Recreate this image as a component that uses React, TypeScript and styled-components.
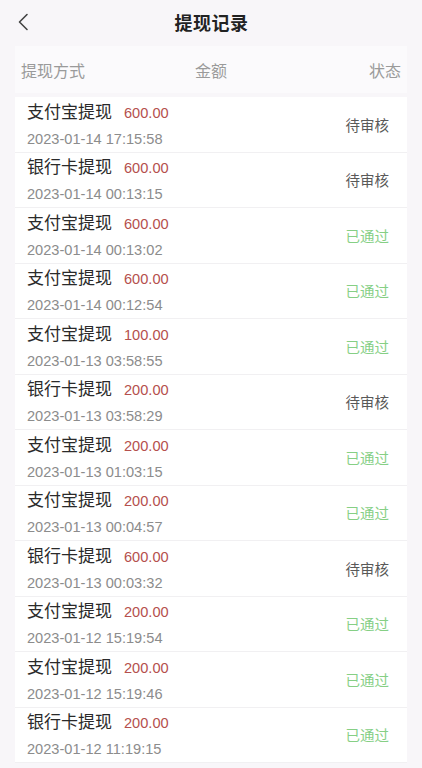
import React from 'react'
import styled, { createGlobalStyle } from 'styled-components'

const GlobalStyle = createGlobalStyle`
  html, body {
    margin: 0;
    padding: 0;
    background: #f8f6f9;
  }
  body {
    font-family: "Liberation Sans", "Noto Sans CJK SC", sans-serif;
  }
`

const Page = styled.div`
  width: 422px;
  min-height: 768px;
  background: #f8f6f9;
  overflow: hidden;
`

const NavBar = styled.div`
  height: 44px;
  display: flex;
  align-items: center;
  justify-content: center;
  position: relative;
`

const BackButton = styled.button`
  position: absolute;
  left: 12px;
  top: 10px;
  width: 22px;
  height: 24px;
  padding: 0;
  border: 0;
  background: none;
  display: flex;
  align-items: center;
  justify-content: center;
`

const Title = styled.h1`
  margin: 0;
  font-size: 18px;
  font-weight: 700;
  color: #222;
  letter-spacing: 0.5px;
  padding-left: 1px;
`

const Panel = styled.div`
  margin: 2px 15px 0;
`

const HeaderRow = styled.div`
  height: 47px;
  display: grid;
  grid-template-columns: 1fr 1fr 1fr;
  align-items: center;
  background: #fbfafc;
  font-size: 16px;
  color: #9a9a9a;
  margin-bottom: 4px;
`

const HeaderCell = styled.div<{ $align: 'left' | 'center' | 'right' }>`
  text-align: ${p => p.$align};
  padding: ${p => (p.$align === 'left' ? '0 0 0 6px' : p.$align === 'right' ? '0 6px 0 0' : '0')};
`

const List = styled.div`
  background: #fff;
`

const Row = styled.div`
  height: 55.5px;
  box-sizing: border-box;
  border-bottom: 1px solid #f1f0f2;
  display: flex;
  align-items: center;
  justify-content: space-between;
  padding: 0 18px 0 12px;
`

const Info = styled.div`
  display: flex;
  flex-direction: column;
  gap: 8px;
  margin-top: 2px;
`

const TopLine = styled.div`
  display: flex;
  align-items: baseline;
  gap: 12px;
`

const Method = styled.span`
  font-size: 17px;
  color: #2a2a2a;
  line-height: 20px;
`

const Amount = styled.span`
  font-size: 14.6px;
  color: #b5504d;
`

const Time = styled.span`
  font-size: 14.6px;
  color: #8c8c8c;
  line-height: 17px;
`

const Status = styled.span<{ $done: boolean }>`
  font-size: 14.5px;
  color: ${p => (p.$done ? '#86cf85' : '#595959')};
`

type Record = {
  method: string
  amount: string
  time: string
  done: boolean
}

const records: Record[] = [
  { method: '支付宝提现', amount: '600.00', time: '2023-01-14 17:15:58', done: false },
  { method: '银行卡提现', amount: '600.00', time: '2023-01-14 00:13:15', done: false },
  { method: '支付宝提现', amount: '600.00', time: '2023-01-14 00:13:02', done: true },
  { method: '支付宝提现', amount: '600.00', time: '2023-01-14 00:12:54', done: true },
  { method: '支付宝提现', amount: '100.00', time: '2023-01-13 03:58:55', done: true },
  { method: '银行卡提现', amount: '200.00', time: '2023-01-13 03:58:29', done: false },
  { method: '支付宝提现', amount: '200.00', time: '2023-01-13 01:03:15', done: true },
  { method: '支付宝提现', amount: '200.00', time: '2023-01-13 00:04:57', done: true },
  { method: '银行卡提现', amount: '600.00', time: '2023-01-13 00:03:32', done: false },
  { method: '支付宝提现', amount: '200.00', time: '2023-01-12 15:19:54', done: true },
  { method: '支付宝提现', amount: '200.00', time: '2023-01-12 15:19:46', done: true },
  { method: '银行卡提现', amount: '200.00', time: '2023-01-12 11:19:15', done: true },
]

const App = () => {
  return (
    <Page>
      <GlobalStyle />
      <NavBar>
        <BackButton aria-label="返回">
          <svg width="12" height="18" viewBox="0 0 12 18" fill="none">
            <path d="M10 1.5 L2.5 9 L10 16.5" stroke="#444" strokeWidth="1.6" strokeLinecap="round" strokeLinejoin="round" />
          </svg>
        </BackButton>
        <Title>提现记录</Title>
      </NavBar>
      <Panel>
        <HeaderRow>
          <HeaderCell $align="left">提现方式</HeaderCell>
          <HeaderCell $align="center">金额</HeaderCell>
          <HeaderCell $align="right">状态</HeaderCell>
        </HeaderRow>
        <List>
          {records.map((r, i) => (
            <Row key={i}>
              <Info>
                <TopLine>
                  <Method>{r.method}</Method>
                  <Amount>{r.amount}</Amount>
                </TopLine>
                <Time>{r.time}</Time>
              </Info>
              <Status $done={r.done}>{r.done ? '已通过' : '待审核'}</Status>
            </Row>
          ))}
        </List>
      </Panel>
    </Page>
  )
}

export default App
